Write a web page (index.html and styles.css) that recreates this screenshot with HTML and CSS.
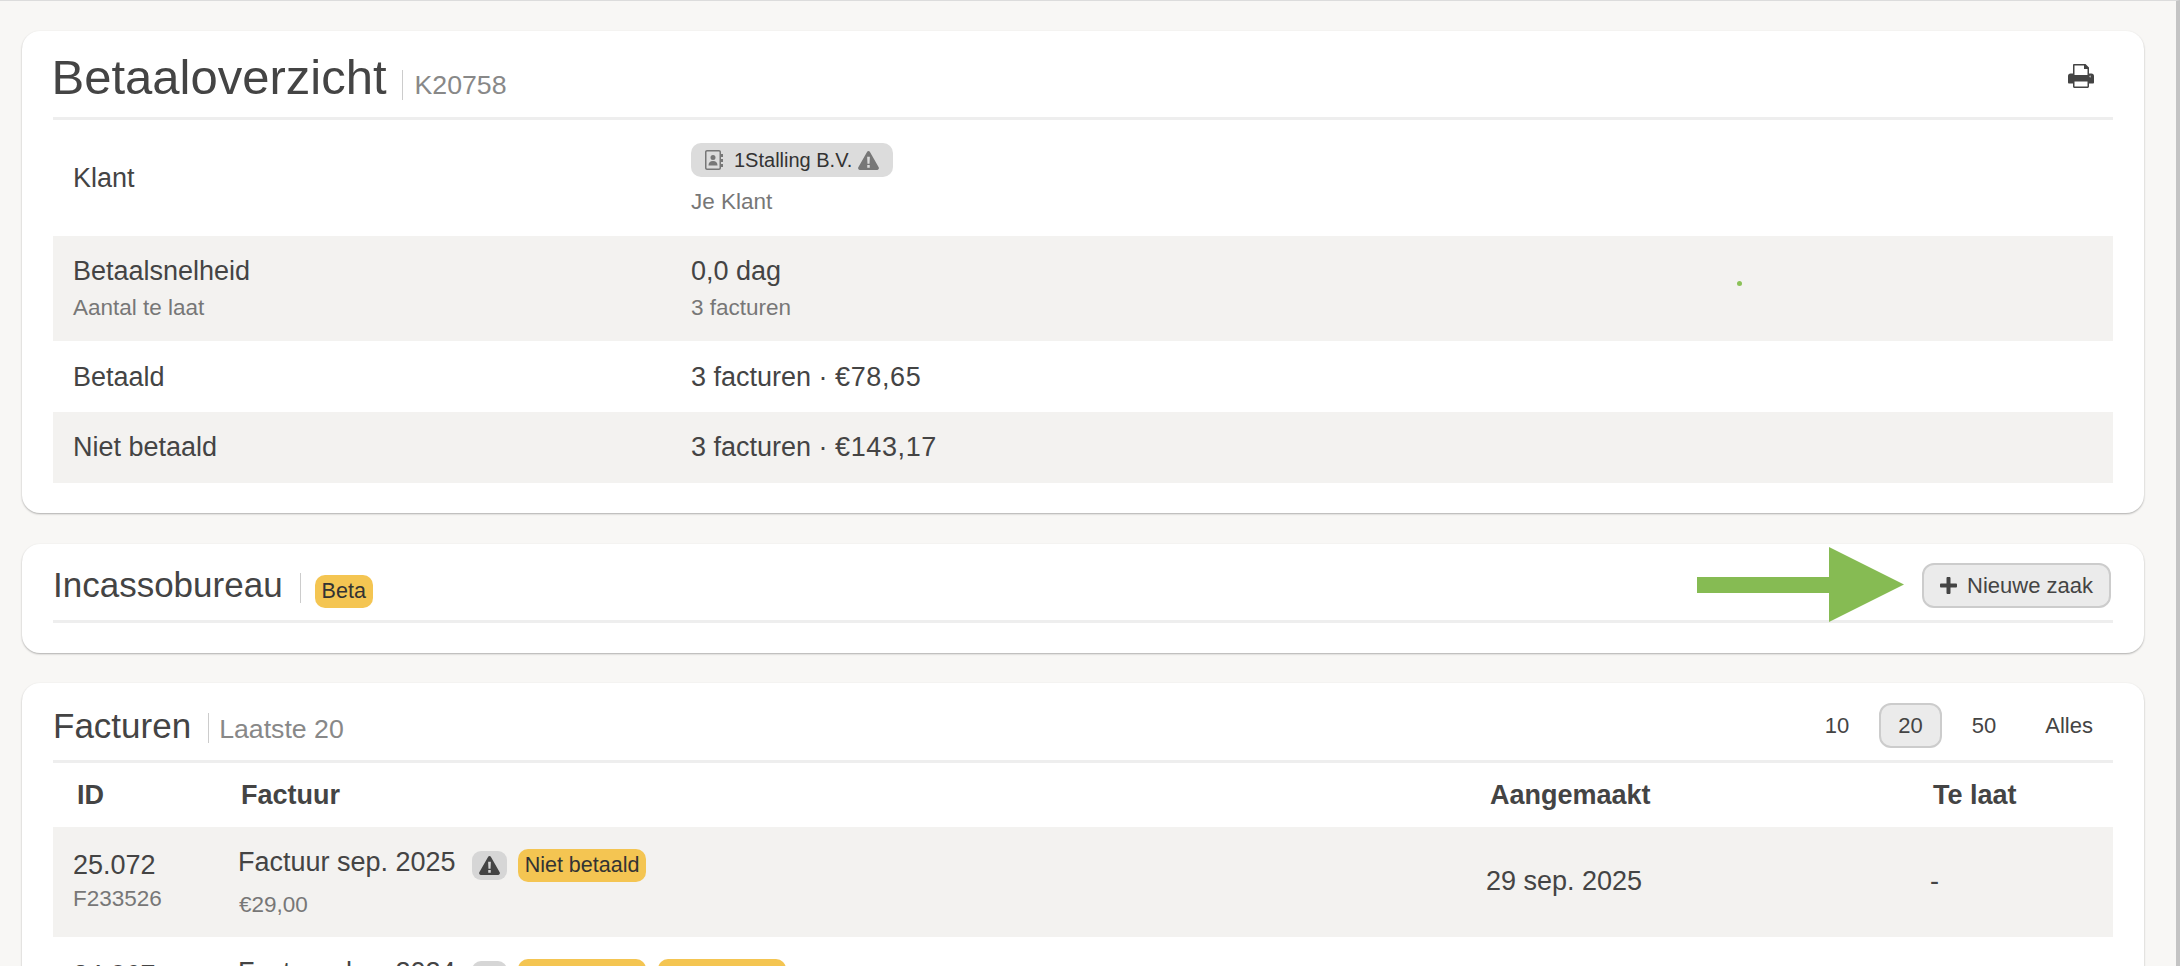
FILE: index.html
```html
<!DOCTYPE html>
<html>
<head>
  <title>Betaaloverzicht</title>
  <link rel="stylesheet" href="styles.css">
</head>
<body>
  <svg class="defs" width="0" height="0">
    <symbol id="warn" viewBox="0 0 20 18">
      <path fill-rule="evenodd" d="M10 0c.6 0 1.1.3 1.4.8l8.3 14.6c.6 1.1-.1 2.6-1.4 2.6H1.7C.4 18-.3 16.500.3 15.400L8.600.8C8.900.3 9.400 0 10 0zM8.700 5.500l.3 6.500h2l.3-6.500zM8.800 13.300v2.500h2.400v-2.500z"/>
    </symbol>
  </svg>

  <div class="page">
    <div class="card card-overview">
      <div class="card-head head-main">
        <h1 class="title">Betaaloverzicht</h1>
        <span class="divider divider-main"></span>
        <span class="subtitle sub-main">K20758</span>
        <svg class="print-icon" viewBox="0 0 26 24">
          <path fill="#444" fill-rule="evenodd" d="M5 0h12.500L21 3.500V9.500h2.500C25 9.500 26 10.500 26 12v6.500c0 .5-.5 1-1 1h-4V22.500c0 .8-.7 1.500-1.500 1.500h-13C5.700 24 5 23.300 5 22.500V19.500H1c-.5 0-1-.5-1-1V12c0-1.500 1-2.500 2.500-2.500H5V1c0-.5.5-1 1-1zM6.500 1.500V11h13V5h-3.500V1.500zM6.500 17.500v5h13v-5zM22.500 11.500a1 1 0 1 0 .01 2z"/>
        </svg>
      </div>
      <div class="info-row row-klant">
        <div class="info-label">Klant</div>
        <div class="info-value">
          <span class="chip">
            <svg class="book-icon" viewBox="0 0 18 20">
              <path fill="#777" fill-rule="evenodd" d="M2 0h12c1.100 0 2 .9 2 2v2h2v3h-2v2h2v3h-2v2h2v3h-2v1c0 1.100-.9 2-2 2H2c-1.100 0-2-.9-2-2V2C0 .9.9 0 2 0zM2 1.500c-.3 0-.5.2-.5.5v16c0 .3.200.5.500.5h12c.3 0 .5-.2.5-.5V2c0-.3-.2-.5-.5-.5zM8 5a2.500 2.500 0 1 1 0 5 2.500 2.500 0 0 1 0-5zM3.500 15.500c0-3 1.500-4.500 4.500-4.500s4.500 1.500 4.500 4.500z"/>
            </svg>
            1Stalling B.V.
            <svg class="warn-icon warn-grey"><use href="#warn"/></svg>
          </span>
          <div class="info-sub sub-klant">Je Klant</div>
        </div>
      </div>
      <div class="info-row row-speed striped">
        <div class="info-label">Betaalsnelheid<div class="info-sub">Aantal te laat</div></div>
        <div class="info-value">0,0 dag<div class="info-sub">3 facturen</div></div>
        <span class="green-dot"></span>
      </div>
      <div class="info-row row-short row-paid">
        <div class="info-label">Betaald</div>
        <div class="info-value">3 facturen · <span class="amount">€78,65</span></div>
      </div>
      <div class="info-row row-short striped">
        <div class="info-label">Niet betaald</div>
        <div class="info-value">3 facturen · <span class="amount">€143,17</span></div>
      </div>
    </div>

    <div class="card card-incasso">
      <div class="card-head head-small">
        <h2 class="title-small">Incassobureau</h2>
        <span class="divider divider-small"></span>
        <span class="badge badge-beta">Beta</span>
        <button class="btn-new" type="button">
          <svg class="plus-icon" viewBox="0 0 17 17"><path fill="#444" d="M6.500 1c0-.5.5-1 1-1h2c.5 0 1 .5 1 1v5.500H16c.5 0 1 .5 1 1v2c0 .5-.5 1-1 1h-5.500V16c0 .5-.5 1-1 1h-2c-.5 0-1-.5-1-1v-5.500H1c-.5 0-1-.5-1-1v-2c0-.5.5-1 1-1h5.500z"/></svg>
          Nieuwe zaak
        </button>
      </div>
      <svg class="arrow" viewBox="0 0 207 75"><path fill="#86bb53" d="M0 30h132V0l75 37.500-75 37.500V46H0z"/></svg>
    </div>

    <div class="card card-facturen">
      <div class="card-head head-list">
        <h2 class="title-small">Facturen</h2>
        <span class="divider divider-list"></span>
        <span class="subtitle sub-small">Laatste 20</span>
        <div class="pager">
          <a class="page-btn">10</a>
          <a class="page-btn active">20</a>
          <a class="page-btn">50</a>
          <a class="page-btn">Alles</a>
        </div>
      </div>
      <div class="table-row table-head">
        <div class="th th-id">ID</div>
        <div class="th th-inv">Factuur</div>
        <div class="th th-date">Aangemaakt</div>
        <div class="th th-late">Te laat</div>
      </div>
      <div class="table-row inv-row striped">
        <div class="cell-id">25.072<div class="info-sub">F233526</div></div>
        <div class="cell-inv">
          <div class="inv-line">
            <span class="inv-name">Factuur sep. 2025</span>
            <span class="warn-chip"><svg class="warn-icon"><use href="#warn"/></svg></span>
            <span class="badge badge-status">Niet betaald</span>
          </div>
          <div class="info-sub">€29,00</div>
        </div>
        <div class="cell-plain">29 sep. 2025</div>
        <div class="cell-plain">-</div>
      </div>
      <div class="table-row inv-row">
        <div class="cell-id">24.067<div class="info-sub">F218342</div></div>
        <div class="cell-inv">
          <div class="inv-line">
            <span class="inv-name">Factuur dec. 2024</span>
            <span class="warn-chip"><svg class="warn-icon"><use href="#warn"/></svg></span>
            <span class="badge badge-status">Niet betaald</span>
            <span class="badge badge-status badge-wide">Aanmaning</span>
          </div>
          <div class="info-sub">€29,00</div>
        </div>
        <div class="cell-plain">29 dec. 2024</div>
        <div class="cell-plain">-</div>
      </div>
    </div>
  </div>
</body>
</html>
```

FILE: styles.css
```css
html, body {
  margin: 0;
  padding: 0;
  height: 966px;
  overflow: hidden;
}

body {
  font-family: "Liberation Sans", Arial, sans-serif;
  background-color: #f8f7f5;
  color: #444;
  font-size: 27px;
  border-top: 1px solid #dcdcdc;
  border-right: 4px solid #c4c4c4;
  box-sizing: border-box;
}

.defs {
  position: absolute;
}

.page {
  display: flex;
  flex-direction: column;
  gap: 30px;
  width: 2122px;
  padding: 30px 0 0 22px;
}

.card {
  position: relative;
  background-color: #fff;
  border-radius: 18px;
  padding: 0 31px 30px;
  box-shadow: 0 1px 2px rgba(0, 0, 0, 0.3);
}

.card-overview {
  margin-bottom: 1px;
}

.card-head {
  display: flex;
  align-items: baseline;
  border-bottom: 3px solid #eee;
}

.head-main {
  height: 86px;
}

.head-small {
  height: 76px;
}

.head-list {
  height: 77px;
}

.title {
  margin: 0 0 0 -1.5px;
  padding-top: 21px;
  font-size: 49px;
  font-weight: normal;
  line-height: 50px;
}

.title-small {
  margin: 0;
  font-size: 35px;
  font-weight: normal;
  line-height: 40px;
}

.head-small .title-small {
  padding-top: 21px;
}

.head-list .title-small {
  padding-top: 23px;
}

.divider {
  align-self: flex-start;
  flex: none;
  width: 1px;
  height: 30px;
  background-color: #ccc;
  margin-left: 17px;
}

.divider-main {
  margin-top: 39px;
  margin-left: 15px;
  margin-right: 12px;
}

.divider-small {
  margin-top: 29px;
  margin-right: 14px;
}

.divider-list {
  margin-top: 30px;
  margin-right: 10px;
}

.subtitle {
  color: #888;
  font-size: 26.7px;
}

.print-icon {
  width: 26px;
  height: 24px;
  margin-left: auto;
  margin-right: 19px;
  align-self: flex-start;
  margin-top: 33px;
}

.info-row {
  position: relative;
  display: grid;
  grid-template-columns: 618px 1fr;
  align-items: center;
  padding-left: 20px;
}

.striped {
  background-color: #f3f2f0;
}

.row-klant {
  height: 116px;
}

.row-speed {
  height: 105px;
}

.row-short {
  height: 71px;
}

.row-paid {
  height: 69px;
  padding-top: 2px;
}

.amount {
  letter-spacing: 0.6px;
}

.info-sub {
  color: #777;
  font-size: 22.5px;
  line-height: 25px;
  margin-top: 7px;
}

.sub-klant {
  margin-top: 12px;
  margin-bottom: -1px;
}

.row-speed .info-sub {
  margin-top: 8px;
  margin-bottom: 1px;
}

.chip {
  display: inline-flex;
  align-items: center;
  height: 34px;
  padding: 0 14px 0 14px;
  background-color: #dcdcdc;
  border-radius: 10px;
  color: #333;
  font-size: 20px;
}

.book-icon {
  width: 18px;
  height: 20px;
  margin-right: 11px;
}

.warn-icon {
  width: 21px;
  height: 19px;
  fill: #444;
}

.warn-grey {
  fill: #777;
  margin-left: 6px;
}

.green-dot {
  position: absolute;
  left: 1684px;
  top: 45px;
  width: 5px;
  height: 5px;
  border-radius: 50%;
  background-color: #8bc158;
}

.badge {
  display: inline-flex;
  align-items: center;
  height: 33px;
  padding: 0 7px;
  background-color: #f4c552;
  border-radius: 10px;
  color: #333;
  font-size: 21.5px;
}

.badge-beta {
  align-self: flex-start;
  margin-top: 31px;
}

.btn-new {
  display: flex;
  align-items: center;
  align-self: flex-start;
  margin: 19px 2px 0 auto;
  width: 189px;
  height: 45px;
  padding: 0 0 0 16px;
  background-color: #ebebeb;
  border: 2px solid #ccc;
  border-radius: 12px;
  color: #444;
  font-family: inherit;
  font-size: 22px;
}

.plus-icon {
  width: 17px;
  height: 17px;
  margin-right: 10px;
}

.arrow {
  position: absolute;
  left: 1675px;
  top: 3px;
  width: 207px;
  height: 75px;
}

.pager {
  display: flex;
  align-self: flex-start;
  gap: 11px;
  margin: 20px 1px 0 auto;
}

.page-btn {
  display: flex;
  align-items: center;
  height: 41px;
  padding: 0 17px;
  border: 2px solid transparent;
  border-radius: 12px;
  color: #444;
  font-size: 22px;
}

.page-btn.active {
  background-color: #ebebeb;
  border-color: #ccc;
}

.table-row {
  display: grid;
  grid-template-columns: 186px 1247px 444px 183px;
  align-items: center;
}

.table-head {
  height: 64px;
}

.th {
  font-weight: bold;
  font-size: 27px;
}

.th-id {
  padding-left: 24px;
}

.th-inv {
  padding-left: 2px;
}

.th-date {
  padding-left: 4px;
}

.th-late {
  padding-left: 3px;
}

.inv-row {
  height: 110px;
}

.cell-id {
  padding-left: 20px;
}

.cell-id .info-sub {
  margin: 5px 0 4px;
}

.cell-inv .info-sub {
  margin: 10px 0 -2px;
}

.cell-plain {
  padding-bottom: 2px;
}

.inv-line {
  display: flex;
  align-items: center;
  height: 33px;
  margin-left: -1px;
}

.inv-name {
  margin-bottom: 6px;
}

.warn-chip {
  display: flex;
  align-items: center;
  justify-content: center;
  width: 35px;
  height: 29px;
  margin-left: 16px;
  background-color: #d6d6d6;
  border-radius: 9px;
}

.badge-status {
  margin-left: 11px;
}

.badge-status + .badge-status {
  margin-left: 12px;
}

.badge-wide {
  padding: 0 9.5px;
}
```
